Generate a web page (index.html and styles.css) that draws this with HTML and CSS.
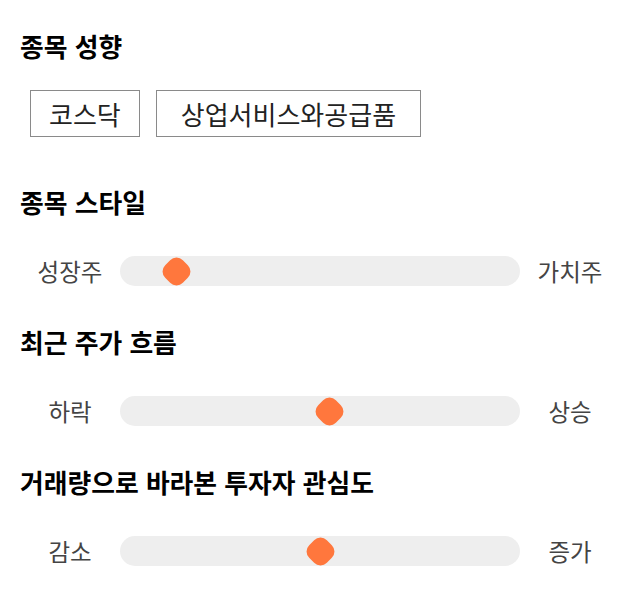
FILE: index.html
```html
<!DOCTYPE html>
<html lang="ko">
<head>
<meta charset="utf-8">
<link rel="stylesheet" href="styles.css">
</head>
<body>
<div class="page">
  <section class="sec sec-tags">
    <h2 class="title">종목 성향</h2>
    <div class="tags">
      <span class="tag">코스닥</span>
      <span class="tag tag-wide">상업서비스와공급품</span>
    </div>
  </section>
  <section class="sec">
    <h2 class="title">종목 스타일</h2>
    <div class="slider-row">
      <span class="lbl">성장주</span>
      <div class="track"><span class="knob" style="left: 14%"></span></div>
      <span class="lbl">가치주</span>
    </div>
  </section>
  <section class="sec">
    <h2 class="title">최근 주가 흐름</h2>
    <div class="slider-row">
      <span class="lbl">하락</span>
      <div class="track"><span class="knob" style="left: 52.25%"></span></div>
      <span class="lbl">상승</span>
    </div>
  </section>
  <section class="sec">
    <h2 class="title">거래량으로 바라본 투자자 관심도</h2>
    <div class="slider-row">
      <span class="lbl">감소</span>
      <div class="track"><span class="knob" style="left: 50%"></span></div>
      <span class="lbl">증가</span>
    </div>
  </section>
</div>
</body>
</html>
```
FILE: styles.css
```css
* { box-sizing: border-box; }
html, body { margin: 0; padding: 0; background: #fff; }
body {
  font-family: "Noto Sans CJK KR", "Noto Sans", sans-serif;
  color: #000;
}
.page {
  width: 640px;
  padding-top: 28px;
}
.title {
  margin: 0;
  padding-left: 20px;
  font-size: 25.8px;
  font-weight: 700;
  line-height: 36px;
  color: #000;
}
.tags {
  display: flex;
  gap: 16px;
  margin-top: 26px;
  padding-left: 30px;
}
.tag {
  display: inline-flex;
  align-items: center;
  height: 47px;
  padding: 0 18px;
  border: 1px solid #8a8a8a;
  font-size: 26px;
  color: #222;
}
.tag-wide { padding: 0 24px; }
.sec { padding-bottom: 38px; }
.sec.sec-tags { padding-bottom: 47px; }
.slider-row {
  display: flex;
  align-items: center;
  height: 30px;
  margin-top: 36px;
  padding: 0 30px;
}
.lbl {
  width: 80px;
  text-align: center;
  font-size: 23.5px;
  color: #444;
  line-height: 30px;
}
.track {
  position: relative;
  width: 400px;
  height: 30px;
  margin: 0 10px;
  border-radius: 15px;
  background: #eeeeee;
}
.knob {
  position: absolute;
  top: 1px;
  width: 29px;
  height: 28px;
  margin-left: -14.5px;
}
.knob::before {
  content: "";
  position: absolute;
  left: 2px;
  top: 1.5px;
  width: 25px;
  height: 25px;
  border-radius: 9px;
  background: #ff773d;
  transform: rotate(45deg);
}
```
